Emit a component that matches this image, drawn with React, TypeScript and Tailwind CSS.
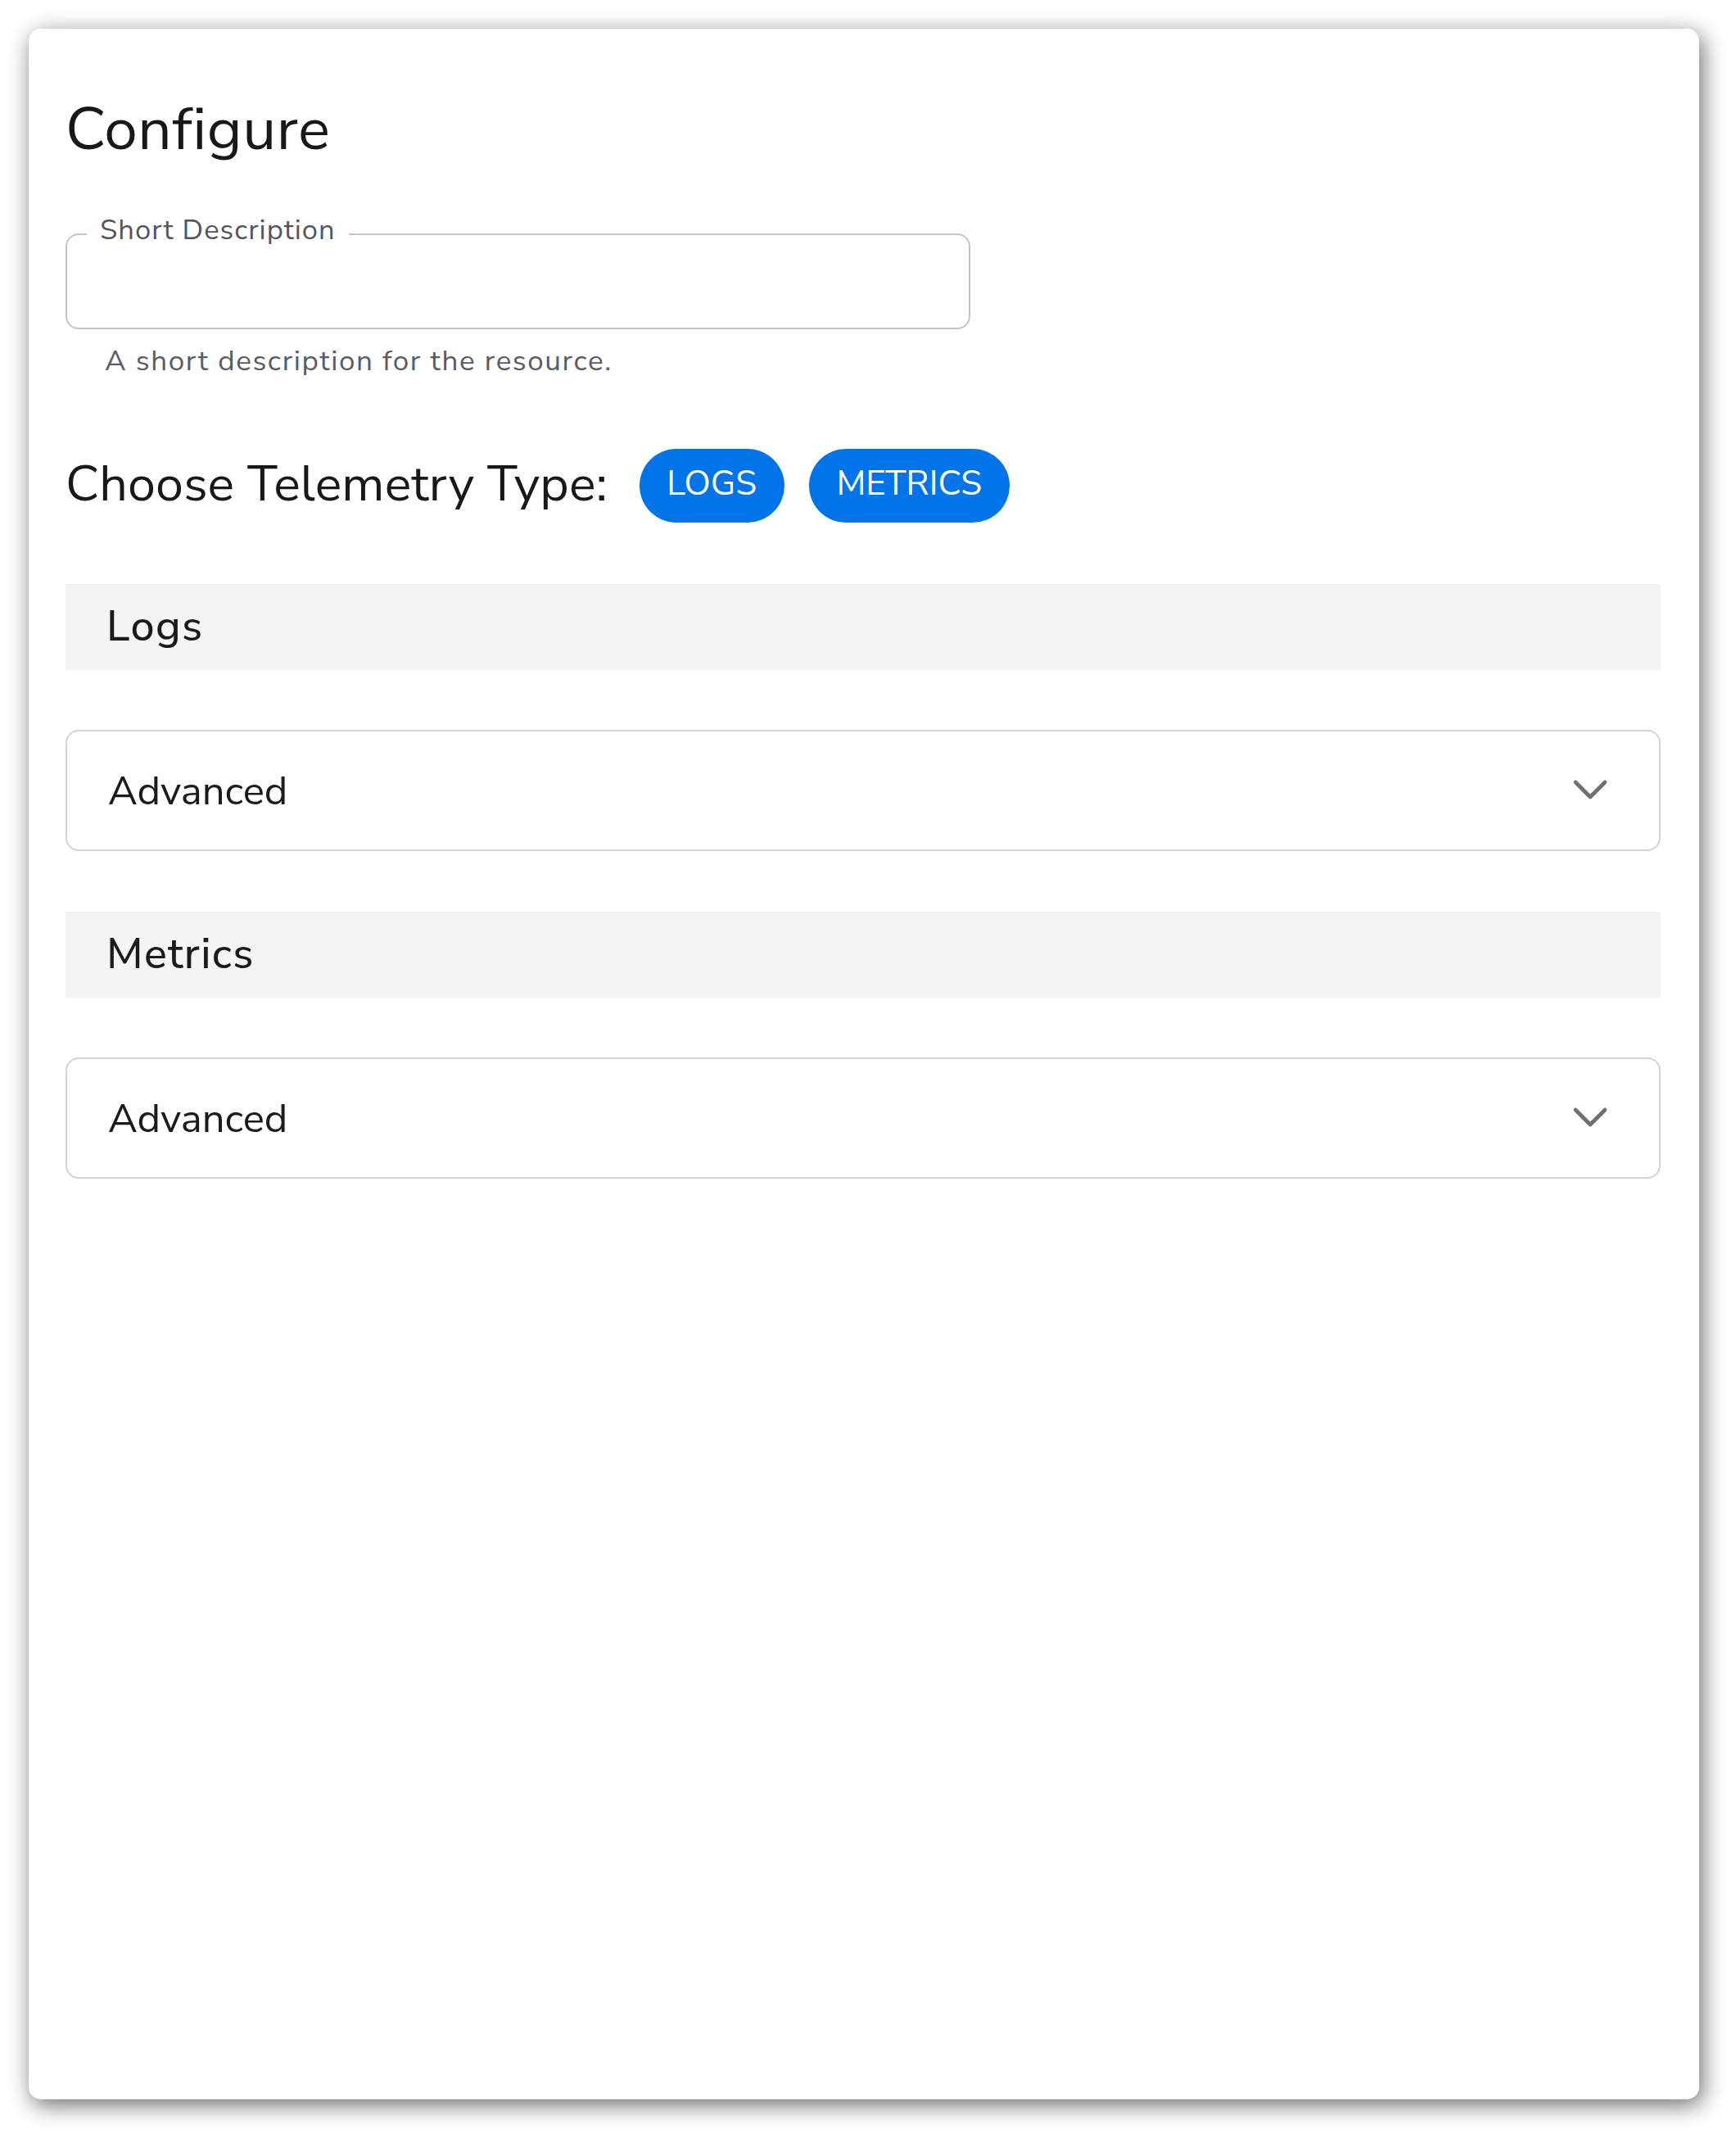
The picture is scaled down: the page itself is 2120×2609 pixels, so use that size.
import React from "react";

function Chevron() {
  return (
    <svg width="44" height="28" viewBox="0 0 44 28" fill="none">
      <path d="M4 4 L22 22 L40 4" stroke="#707070" strokeWidth="4.6" strokeLinecap="round" strokeLinejoin="round" />
    </svg>
  );
}

function Section({ title }: { title: string }) {
  return (
    <>
      <div className="h-[105px] bg-[#f4f4f4] pl-[50px] pt-[26px]">
        <div className="text-[52px] font-medium leading-none tracking-[1.3px] text-[#1a1b1f]">{title}</div>
      </div>
      <div className="mt-[73px] flex h-[148px] items-center justify-between rounded-[16px] border-[2.5px] border-[#d3d3d8] pl-[50px] pr-[62px]">
        <div className="mt-[1px] text-[49px] leading-none text-[#1a1b1f]">Advanced</div>
        <Chevron />
      </div>
    </>
  );
}

export default function App() {
  return (
    <div className="min-h-[2609px] bg-white pl-[35px] pt-[35px]" style={{ fontFamily: '"Nunito Sans", Lato, "Noto Sans", sans-serif' }}>
      <div className="h-[2528px] w-[2040px] rounded-[15px] bg-white pl-[45px] pr-[47px] pt-[87px] shadow-[4px_7px_28px_rgba(0,0,0,0.58)]">
        <h1 className="text-[73px] font-normal leading-none tracking-[0.6px] text-[#17181c]">Configure</h1>

        <div className="relative mt-[90px] h-[117px] w-[1105px] rounded-[16px] border-2 border-[#c4c4c4]">
          <span className="absolute left-[24px] top-[-23px] bg-white px-[16px] text-[34.5px] leading-none tracking-[1.05px] text-[#55555f]">
            Short Description
          </span>
        </div>
        <div className="ml-[48px] mt-[21px] text-[35px] leading-none tracking-[1.6px] text-[#5b5b66]">
          A short description for the resource.
        </div>

        <div className="mt-[90px] flex items-start">
          <div className="mt-[13px] text-[61px] leading-none tracking-[0.15px] text-[#17181c]">Choose Telemetry Type:</div>
          <div className="ml-[39px] flex gap-[30px]">
            <button className="flex h-[90px] w-[177px] items-center justify-center rounded-full bg-[#0074e8] pb-[5px] text-[42px] leading-none text-white">
              LOGS
            </button>
            <button className="flex h-[90px] w-[245px] items-center justify-center rounded-full bg-[#0074e8] pb-[5px] text-[42px] leading-none text-white">
              METRICS
            </button>
          </div>
        </div>

        <div className="mt-[75px]">
          <Section title="Logs" />
        </div>
        <div className="mt-[74px]">
          <Section title="Metrics" />
        </div>
      </div>
    </div>
  );
}
